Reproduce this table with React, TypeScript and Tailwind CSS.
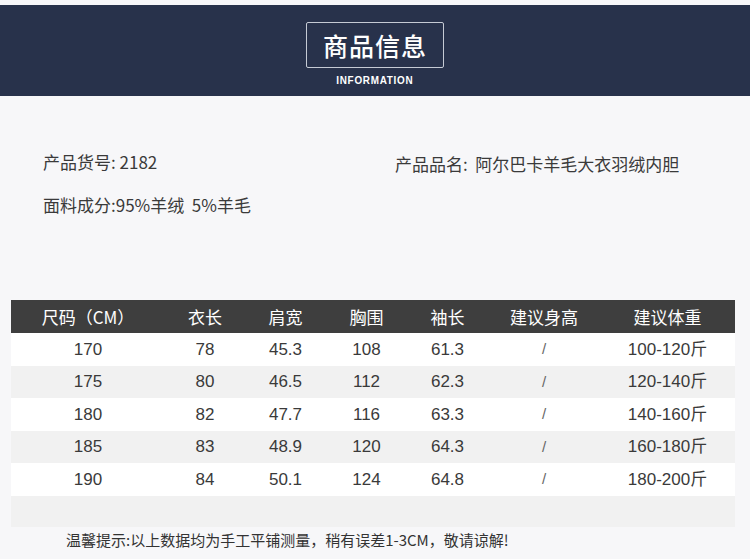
import React from "react";

const rows = [
  ["170", "78", "45.3", "108", "61.3", "/", "100-120斤"],
  ["175", "80", "46.5", "112", "62.3", "/", "120-140斤"],
  ["180", "82", "47.7", "116", "63.3", "/", "140-160斤"],
  ["185", "83", "48.9", "120", "64.3", "/", "160-180斤"],
  ["190", "84", "50.1", "124", "64.8", "/", "180-200斤"],
];

const heads = ["尺码（CM）", "衣长", "肩宽", "胸围", "袖长", "建议身高", "建议体重"];

const cjk = "font-['Noto_Sans_CJK_SC',sans-serif]";
const grid = "grid grid-cols-[154px_80px_81px_81px_81px_112px_135px]";

const App: React.FC = () => {
  return (
    <div className={`w-[750px] h-[559px] overflow-hidden bg-[#f7f7f9] pt-[5px] ${cjk}`}>
      {/* header band */}
      <div className="h-[91px] bg-[#28324b] flex flex-col items-center">
        <div className="mt-[17px] w-[138px] h-[46px] border border-[#c5cad4] rounded-[2px] flex items-center justify-center">
          <span className="text-[25px] leading-none font-medium text-white tracking-[1px]">商品信息</span>
        </div>
        <div className="mt-[7px] text-[11px] leading-none font-bold text-white font-['Liberation_Sans_Narrow','Liberation_Sans',sans-serif] tracking-[0.8px] scale-x-90">
          INFORMATION
        </div>
      </div>

      {/* product info */}
      <div className="mt-[54px] pl-[43px] text-[17px] leading-[24px] text-[#3a3a3a]">
        <div className="flex">
          <div className="w-[352px]">产品货号: 2182</div>
          <div className="pt-[2px]">产品品名:&nbsp;&nbsp;阿尔巴卡羊毛大衣羽绒内胆</div>
        </div>
        <div className="mt-[17px]">面料成分:95%羊绒&nbsp;&nbsp;5%羊毛</div>
      </div>

      {/* size table */}
      <div className="mt-[83px] mx-[11px] w-[724px]">
        <div className={`${grid} h-[33px] bg-[#3e3e3e] text-white text-[17px] items-center text-center`}>
          {heads.map((h) => (
            <div key={h}>{h}</div>
          ))}
        </div>
        {rows.map((r, i) => (
          <div
            key={r[0]}
            className={`${grid} h-[32.6px] items-center text-center text-[17px] text-[#3a3a3a] font-['Liberation_Sans','Noto_Sans_CJK_SC',sans-serif] ${
              i % 2 === 1 ? "bg-[#f1f1f1]" : "bg-white"
            }`}
          >
            {r.map((c, j) => (
              <div key={j} className={j === 5 ? "text-[#666] text-[15px]" : ""}>
                {c}
              </div>
            ))}
          </div>
        ))}
        <div className="h-[31px] bg-[#f1f1f1]" />
      </div>

      <div className="mt-[3px] pl-[66px] text-[15px] leading-[20px] text-[#333]">
        温馨提示:以上数据均为手工平铺测量，稍有误差1-3CM，敬请谅解!
      </div>
    </div>
  );
};

export default App;
